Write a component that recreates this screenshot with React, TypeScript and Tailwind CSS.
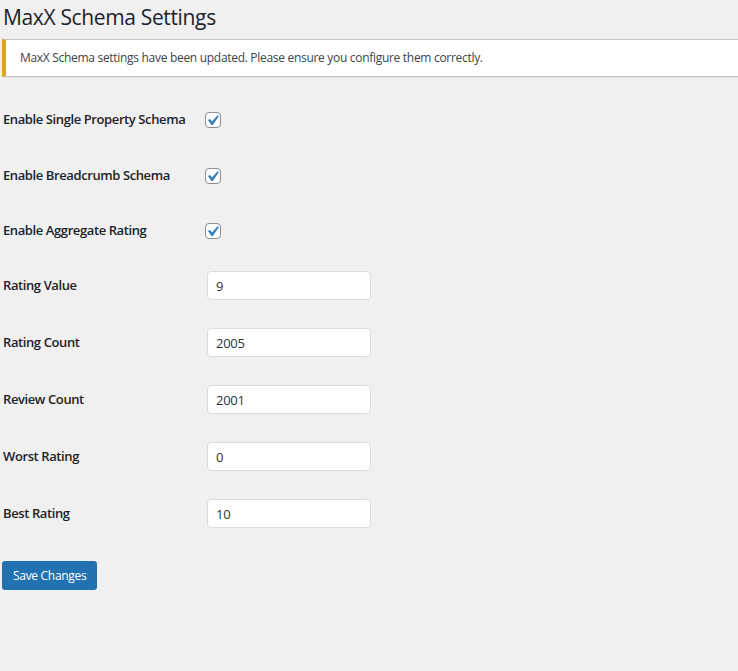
const font = { fontFamily: "'Open Sans', 'Noto Sans', sans-serif" };

const CheckBox = () => (
  <span className="relative inline-block h-4 w-4 rounded-[4px] border border-[#8c8f94] bg-white">
    <svg viewBox="0 0 20 20" className="absolute -left-[4px] -top-[3px] h-[21px] w-[21px]">
      <path d="M14.83 4.89l1.34.94-5.81 8.38H9.02L5.78 9.67l1.34-1.25 2.57 2.4z" fill="#3582c4" />
    </svg>
  </span>
);

const checkRows = [
  { label: "Enable Single Property Schema", h: "h-[56px]" },
  { label: "Enable Breadcrumb Schema", h: "h-[56px]" },
  { label: "Enable Aggregate Rating", h: "h-[53px]" },
];

const inputRows = [
  { label: "Rating Value", value: "9" },
  { label: "Rating Count", value: "2005" },
  { label: "Review Count", value: "2001" },
  { label: "Worst Rating", value: "0" },
  { label: "Best Rating", value: "10" },
];

export default function App() {
  return (
    <div className="min-h-[671px] w-full overflow-hidden bg-[#f0f0f1] pl-[2px] text-[#1d2327]" style={font}>
      <h1 className="pt-[2px] pb-[7px] pl-[1px] text-[21px] font-normal leading-[30px] tracking-[-0.35px]">
        MaxX Schema Settings
      </h1>

      <div className="-mr-5 flex h-[38px] items-center border border-l-4 border-[#c3c4c7] border-l-[#dba617] bg-white pl-[14px] shadow-[0_1px_1px_rgba(0,0,0,0.04)]">
        <p className="text-[12px] tracking-[-0.3px] text-[#3c434a]">
          MaxX Schema settings have been updated. Please ensure you configure them correctly.
        </p>
      </div>

      <form className="mt-[15px]">
        {checkRows.map((r) => (
          <div key={r.label} className={`flex items-center ${r.h}`}>
            <label className="w-[203px] pl-[1px] text-[13px] font-semibold tracking-[-0.4px]">{r.label}</label>
            <CheckBox />
          </div>
        ))}
        {inputRows.map((r) => (
          <div key={r.label} className="flex h-[57px] items-center">
            <label className="w-[205px] pl-[1px] text-[13px] font-semibold tracking-[-0.4px]">{r.label}</label>
            <input
              readOnly
              value={r.value}
              className="h-[29px] w-[164px] rounded-[4px] border border-[#dcdcde] bg-white px-[8px] text-[13px] tracking-[-0.3px] text-[#2c3338] outline-none"
              style={font}
            />
          </div>
        ))}
        <button
          type="button"
          className="mt-[19px] h-[29px] rounded-[3px] bg-[#2271b1] px-[11px] text-[12px] tracking-[-0.3px] text-white"
          style={font}
        >
          Save Changes
        </button>
      </form>
    </div>
  );
}
